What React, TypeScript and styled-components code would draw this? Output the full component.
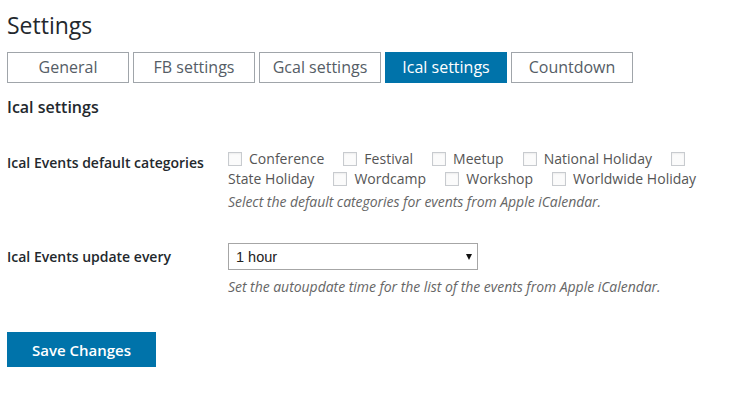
import React from "react";
import styled, { createGlobalStyle } from "styled-components";

const Global = createGlobalStyle`
  html, body { margin: 0; padding: 0; background: #fff; }
  body { font-family: "Open Sans", "DejaVu Sans", sans-serif; color: #23282d; }
  * { box-sizing: border-box; }
`;

const Page = styled.div`
  padding: 0 7px;
  width: 730px;
`;

const Title = styled.h1`
  margin: 0;
  padding-top: 10px;
  font-size: 23px;
  font-weight: 400;
  line-height: 30px;
  color: #23282d;
`;

const Tabs = styled.nav`
  display: flex;
  gap: 4px;
  margin-top: 12px;
`;

const Tab = styled.a<{ $active?: boolean }>`
  display: block;
  width: 122px;
  height: 31px;
  line-height: 28px;
  padding-bottom: 1px;
  text-align: center;
  font-size: 16px;
  text-decoration: none;
  border: 1px solid ${(p) => (p.$active ? "#0073aa" : "#a0a5aa")};
  background: ${(p) => (p.$active ? "#0073aa" : "#fff")};
  color: ${(p) => (p.$active ? "#fff" : "#555d66")};
`;

const SectionTitle = styled.h2`
  margin: 14px 0 0;
  font-size: 16px;
  font-weight: 600;
  line-height: 20px;
  color: #23282d;
`;

const Row = styled.div<{ $top: number }>`
  display: grid;
  grid-template-columns: 221px 495px;
  margin-top: ${(p) => p.$top}px;
`;

const Label = styled.div<{ $offset: number }>`
  padding-top: ${(p) => p.$offset}px;
  font-size: 14px;
  font-weight: 600;
  line-height: 20px;
  color: #23282d;
`;

const Field = styled.div`
  font-size: 14px;
  line-height: 20px;
`;

const Options = styled.div`
  color: #555;
  letter-spacing: 0.02px;
`;

const Option = styled.label`
  margin-right: 19px;
  cursor: pointer;
`;

const Box = styled.span`
  display: inline-block;
  width: 14px;
  height: 14px;
  margin-right: 7px;
  vertical-align: middle;
  position: relative;
  top: -1px;
  border: 1px solid #c8cbcf;
  background: #fbfbfb;
  box-shadow: inset 0 1px 2px rgba(0, 0, 0, 0.06);
`;

const Desc = styled.p<{ $top: number }>`
  margin: ${(p) => p.$top}px 0 0;
  font-style: italic;
  font-size: 14px;
  line-height: 20px;
  letter-spacing: -0.04px;
  color: #666;
`;

const SelectWrap = styled.div`
  position: relative;
  width: 250px;
  height: 27px;
  &::after {
    content: "";
    position: absolute;
    right: 6px;
    top: 11px;
    border-left: 3.5px solid transparent;
    border-right: 3.5px solid transparent;
    border-top: 6px solid #111;
    pointer-events: none;
  }
`;

const Select = styled.select`
  appearance: none;
  -webkit-appearance: none;
  width: 100%;
  height: 27px;
  margin: 0;
  padding: 0 20px 0 7px;
  border: 1px solid #a6a6a6;
  border-radius: 0;
  background: #fff;
  font-family: "Liberation Sans", Arial, sans-serif;
  font-size: 14.5px;
  color: #222;
  outline: none;
`;

const SaveButton = styled.button`
  display: block;
  margin-top: 35px;
  width: 149px;
  height: 35px;
  padding: 0;
  border: none;
  background: #0073aa;
  box-shadow: 0 1px 0 #006799;
  color: #fff;
  font-family: "Open Sans", sans-serif;
  font-size: 15px;
  font-weight: 600;
  line-height: 37px;
  cursor: pointer;
`;

const tabs = ["General", "FB settings", "Gcal settings", "Ical settings", "Countdown"];
const categories = [
  "Conference",
  "Festival",
  "Meetup",
  "National Holiday",
  "State Holiday",
  "Wordcamp",
  "Workshop",
  "Worldwide Holiday",
];

export default function App() {
  return (
    <Page>
      <Global />
      <Title>Settings</Title>
      <Tabs>
        {tabs.map((t) => (
          <Tab key={t} href="#" $active={t === "Ical settings"}>
            {t}
          </Tab>
        ))}
      </Tabs>
      <SectionTitle>Ical settings</SectionTitle>
      <Row $top={32}>
        <Label $offset={4}>Ical Events default categories</Label>
        <Field>
          <Options>
            {categories.map((c) => (
              <Option key={c}>
                <Box />
                <span>{c}</span>
              </Option>
            ))}
          </Options>
          <Desc $top={3}>Select the default categories for events from Apple iCalendar.</Desc>
        </Field>
      </Row>
      <Row $top={31}>
        <Label $offset={4}>Ical Events update every</Label>
        <Field>
          <SelectWrap>
            <Select defaultValue="1 hour">
              <option>30 minutes</option>
              <option>1 hour</option>
              <option>6 hours</option>
              <option>12 hours</option>
              <option>1 day</option>
            </Select>
          </SelectWrap>
          <Desc $top={7}>Set the autoupdate time for the list of the events from Apple iCalendar.</Desc>
        </Field>
      </Row>
      <SaveButton>Save Changes</SaveButton>
    </Page>
  );
}
